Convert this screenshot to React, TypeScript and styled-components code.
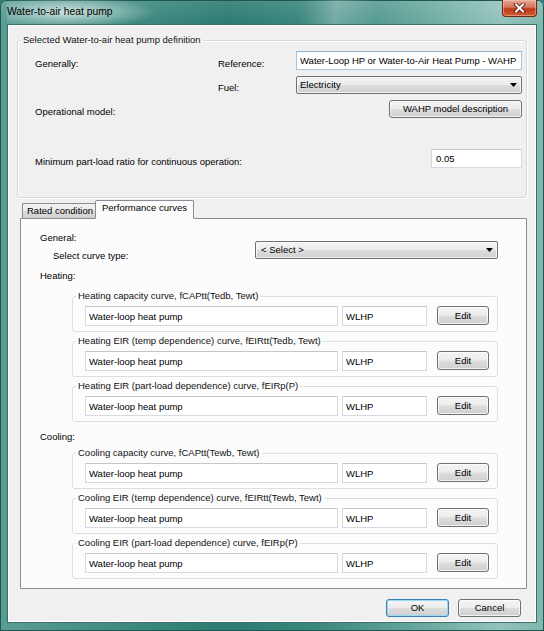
import React from 'react'
import styled, { createGlobalStyle } from 'styled-components'

const GlobalStyle = createGlobalStyle`
  html, body {
    margin: 0;
    padding: 0;
    background: #2f7b73;
  }
  body {
    font-family: "Liberation Sans", Arial, sans-serif;
    font-size: 9.5px;
    color: #000;
  }
  #root {
    width: 544px;
    height: 631px;
  }
`

interface Curve {
  title: string
  name: string
  code: string
}

const heatingCurves: Curve[] = [
  { title: 'Heating capacity curve, fCAPtt(Tedb, Tewt)', name: 'Water-loop heat pump', code: 'WLHP' },
  { title: 'Heating EIR (temp dependence) curve, fEIRtt(Tedb, Tewt)', name: 'Water-loop heat pump', code: 'WLHP' },
  { title: 'Heating EIR (part-load dependence) curve, fEIRp(P)', name: 'Water-loop heat pump', code: 'WLHP' },
]

const coolingCurves: Curve[] = [
  { title: 'Cooling capacity curve, fCAPtt(Tewb, Tewt)', name: 'Water-loop heat pump', code: 'WLHP' },
  { title: 'Cooling EIR (temp dependence) curve, fEIRtt(Tewb, Tewt)', name: 'Water-loop heat pump', code: 'WLHP' },
  { title: 'Cooling EIR (part-load dependence) curve, fEIRp(P)', name: 'Water-loop heat pump', code: 'WLHP' },
]

const DropArrow: React.FC = () => (
  <svg width="7" height="4" viewBox="0 0 7 4">
    <polygon points="0,0 7,0 3.5,4" fill="#000" />
  </svg>
)

const CloseGlyph: React.FC = () => (
  <svg width="13" height="10" viewBox="0 0 13 10">
    <path d="M3 1.5 L10 8.5 M10 1.5 L3 8.5" stroke="#5b1608" strokeWidth="3.8" strokeLinecap="square" />
    <path d="M3 1.5 L10 8.5 M10 1.5 L3 8.5" stroke="#fff" strokeWidth="2" strokeLinecap="square" />
  </svg>
)

const CurveGroup: React.FC<{ curve: Curve }> = ({ curve }) => (
  <CurveBox>
    <GroupTitle>{curve.title}</GroupTitle>
    <CurveRow>
      <TextBox readOnly value={curve.name} $width={253} $height={20} />
      <TextBox readOnly value={curve.code} $width={85} $height={20} />
      <EditButton>Edit</EditButton>
    </CurveRow>
  </CurveBox>
)

const App: React.FC = () => (
  <>
    <GlobalStyle />
    <Window>
      <TitleBar>
        <Title>Water-to-air heat pump</Title>
        <CloseButton>
          <CloseGlyph />
        </CloseButton>
      </TitleBar>
      <Client>
        <GroupBox>
          <GroupTitle>Selected Water-to-air heat pump definition</GroupTitle>
          <DefinitionGrid>
            <FieldLabel $col="1">Generally:</FieldLabel>
            <FieldLabel $col="2">Reference:</FieldLabel>
            <ReferenceBox
              readOnly
              value="Water-Loop HP or Water-to-Air Heat Pump - WAHP :"
              $focused
            />
            <FieldLabel $col="2">Fuel:</FieldLabel>
            <Combo $col="3">
              <span>Electricity</span>
              <DropArrow />
            </Combo>
            <FieldLabel $col="1">Operational model:</FieldLabel>
            <DescriptionButton>WAHP model description</DescriptionButton>
            <FieldLabel $col="1 / 3">Minimum part-load ratio for continuous operation:</FieldLabel>
            <RatioBox readOnly value="0.05" $width={91} $height={19} />
          </DefinitionGrid>
        </GroupBox>

        <TabArea>
          <TabStrip>
            <Tab>Rated condition</Tab>
            <Tab $active>Performance curves</Tab>
          </TabStrip>
          <TabPanel>
            <SectionLabel>General:</SectionLabel>
            <SelectRow>
              <SelectLabel>Select curve type:</SelectLabel>
              <CurveTypeCombo>
                <span>&lt; Select &gt;</span>
                <DropArrow />
              </CurveTypeCombo>
            </SelectRow>

            <SectionLabel $gap={11}>Heating:</SectionLabel>
            <CurveList $gap={8}>
              {heatingCurves.map((curve) => (
                <CurveGroup key={curve.title} curve={curve} />
              ))}
            </CurveList>

            <SectionLabel $gap={9}>Cooling:</SectionLabel>
            <CurveList $gap={4}>
              {coolingCurves.map((curve) => (
                <CurveGroup key={curve.title} curve={curve} />
              ))}
            </CurveList>
          </TabPanel>
        </TabArea>

        <ButtonRow>
          <DialogButton $default>OK</DialogButton>
          <DialogButton>Cancel</DialogButton>
        </ButtonRow>
      </Client>
    </Window>
  </>
)
export default App

const Window = styled.div`
  box-sizing: border-box;
  width: 544px;
  height: 631px;
  display: flex;
  flex-direction: column;
  padding: 0 7px 8px;
  border-radius: 6px 6px 0 0;
  background:
    linear-gradient(180deg, rgba(255, 255, 255, 0.12) 0px, rgba(255, 255, 255, 0) 24px),
    linear-gradient(90deg, #5b9d94 0%, #3f8b82 22%, #2c7a71 42%, #3a877e 58%, #6aa99f 78%, #93c3bb 92%, #7fb6ad 100%);
  box-shadow: inset 0 0 0 1px #1e5650;
`
const TitleBar = styled.div`
  height: 24px;
  flex: 0 0 auto;
  display: flex;
  align-items: flex-start;
  justify-content: space-between;
  background:
    radial-gradient(ellipse 90px 16px at 60px 12px, rgba(225, 240, 235, 0.85), rgba(225, 240, 235, 0) 100%),
    linear-gradient(100deg, rgba(255, 255, 255, 0) 55%, rgba(255, 255, 255, 0.25) 62%, rgba(255, 255, 255, 0) 70%);
`
const Title = styled.span`
  font-family: "Liberation Sans", Arial, sans-serif;
  font-size: 10.3px;
  line-height: 12px;
  padding-top: 6px;
  color: #000;
`
const CloseButton = styled.div`
  box-sizing: border-box;
  width: 35px;
  height: 17px;
  display: flex;
  align-items: center;
  justify-content: center;
  border: 1px solid #6b2514;
  border-top: none;
  border-radius: 0 0 4px 4px;
  background: linear-gradient(180deg, #e6a794 0%, #d5775c 45%, #c0391a 55%, #cf5a33 100%);
  box-shadow: inset 0 0 0 1px rgba(255, 210, 190, 0.45);
`
const Client = styled.div`
  flex: 1;
  display: flex;
  flex-direction: column;
  min-height: 0;
  padding: 9px 9px 5px;
  background: #f0f0f0;
  border: 1px solid #3d6f69;
  box-shadow: inset 0 0 0 1px #ffffff;
`
const GroupBox = styled.fieldset`
  margin: 0;
  padding: 0;
  min-width: 0;
  border: 1px solid #d5d9dd;
  border-radius: 3px;
  box-shadow: inset 1px 1px 0 #ffffff, 1px 1px 0 #ffffff;
`
const GroupTitle = styled.legend`
  margin-left: 3px;
  padding: 0 2px;
  line-height: 12px;
  color: #111;
  white-space: nowrap;
`
const DefinitionGrid = styled.div`
  display: grid;
  grid-template-columns: 183px 78px 226px;
  grid-template-rows: 19px 18px 18px 44px;
  row-gap: 6px;
  padding: 5px 4px 29px 17px;
`
const FieldLabel = styled.span<{ $col: string }>`
  grid-column: ${({ $col }) => $col};
  align-self: end;
  line-height: 12px;
  white-space: nowrap;
`
const TextBox = styled.input<{ $width?: number, $height?: number, $focused?: boolean }>`
  box-sizing: border-box;
  width: ${({ $width }) => ($width ? `${$width}px` : '100%')};
  height: ${({ $height }) => ($height ? `${$height}px` : '100%')};
  margin: 0;
  padding: 0 3px;
  font: inherit;
  color: #000;
  background: #fff;
  border: 1px solid ${({ $focused }) => ($focused ? '#a9c4dc' : '#d6d9dd')};
  border-top-color: ${({ $focused }) => ($focused ? '#8eb0cf' : '#c4c8cc')};
  border-radius: 1px;
  outline: none;
`
const ReferenceBox = styled(TextBox)`
  grid-column: 3;
`
const RatioBox = styled(TextBox)`
  grid-column: 3;
  justify-self: end;
  align-self: end;
  padding-left: 4px;
`
const buttonFace = `
  box-sizing: border-box;
  border: 1px solid #707070;
  border-radius: 3px;
  background: linear-gradient(180deg, #f4f4f4 0%, #ececec 48%, #dddddd 52%, #cfcfcf 100%);
  box-shadow: inset 0 0 0 1px rgba(255, 255, 255, 0.75);
  color: #000;
`
const Combo = styled.div<{ $col?: string }>`
  ${buttonFace}
  grid-column: ${({ $col }) => $col ?? 'auto'};
  display: flex;
  align-items: center;
  justify-content: space-between;
  padding: 0 4px 0 3px;
  border-radius: 2px;
  line-height: 12px;
`
const PushButton = styled.div`
  ${buttonFace}
  display: flex;
  align-items: center;
  justify-content: center;
  line-height: 12px;
  white-space: nowrap;
`
const DescriptionButton = styled(PushButton)`
  grid-column: 3;
  justify-self: end;
  width: 133px;
`
const EditButton = styled(PushButton)`
  width: 52px;
  height: 19px;
  margin-left: 6px;
  margin-top: -1px;
`
const TabArea = styled.div`
  flex: 1;
  display: flex;
  flex-direction: column;
  min-height: 0;
  margin: 3px 0 0 3px;
`
const TabStrip = styled.div`
  height: 18px;
  display: flex;
  align-items: flex-end;
  padding-left: 2px;
  margin-bottom: -1px;
  position: relative;
  z-index: 1;
`
const Tab = styled.div<{ $active?: boolean }>`
  box-sizing: border-box;
  display: flex;
  align-items: center;
  line-height: 12px;
  white-space: nowrap;
  border: 1px solid #898c95;
  border-radius: 2px 2px 0 0;
  ${({ $active }) => ($active
    ? `
      height: 19px;
      width: 99px;
      margin-left: -1px;
      padding: 0 0 3px 6px;
      background: #fcfcfc;
      border-bottom-color: #fcfcfc;
    `
    : `
      height: 16px;
      width: 74px;
      padding: 0 0 1px 4px;
      border-right: none;
      background: linear-gradient(180deg, #f2f2f2 0%, #ebebeb 50%, #dddddd 51%, #cfcfcf 100%);
    `)}
`
const TabPanel = styled.div`
  flex: 1;
  min-height: 0;
  display: flex;
  flex-direction: column;
  padding: 13px 28px 0 19px;
  background: #fcfcfc;
  border: 1px solid #898c95;
  border-radius: 0 0 1px 1px;
`
const SectionLabel = styled.div<{ $gap?: number }>`
  line-height: 12px;
  margin-top: ${({ $gap }) => $gap ?? 0}px;
`
const SelectRow = styled.div`
  height: 18px;
  margin-top: -3px;
  display: flex;
  align-items: flex-end;
  justify-content: space-between;
  padding-left: 13px;
`
const SelectLabel = styled.span`
  line-height: 12px;
  margin-bottom: -3px;
`
const CurveTypeCombo = styled(Combo)`
  width: 243px;
  height: 18px;
  padding-left: 5px;
`
const CurveList = styled.div<{ $gap: number }>`
  display: flex;
  flex-direction: column;
  gap: 3px;
  margin: ${({ $gap }) => $gap}px 0 0 32px;
`
const CurveBox = styled.fieldset`
  margin: 0;
  padding: 0;
  min-width: 0;
  border: 1px solid #dcdfe2;
  border-radius: 3px;
  box-shadow: inset 1px 1px 0 #ffffff;
`
const CurveRow = styled.div`
  display: flex;
  align-items: center;
  gap: 4px;
  padding: 4px 8px 5px 12px;
`
const ButtonRow = styled.div`
  display: flex;
  justify-content: flex-end;
  gap: 9px;
  margin-top: 10px;
  padding-right: 6px;
`
const DialogButton = styled(PushButton)<{ $default?: boolean }>`
  width: 63px;
  height: 18px;
  ${({ $default }) => $default && `
    border-color: #3c7fb1;
    box-shadow: inset 0 0 0 1px #9ad9f2;
  `}
`
